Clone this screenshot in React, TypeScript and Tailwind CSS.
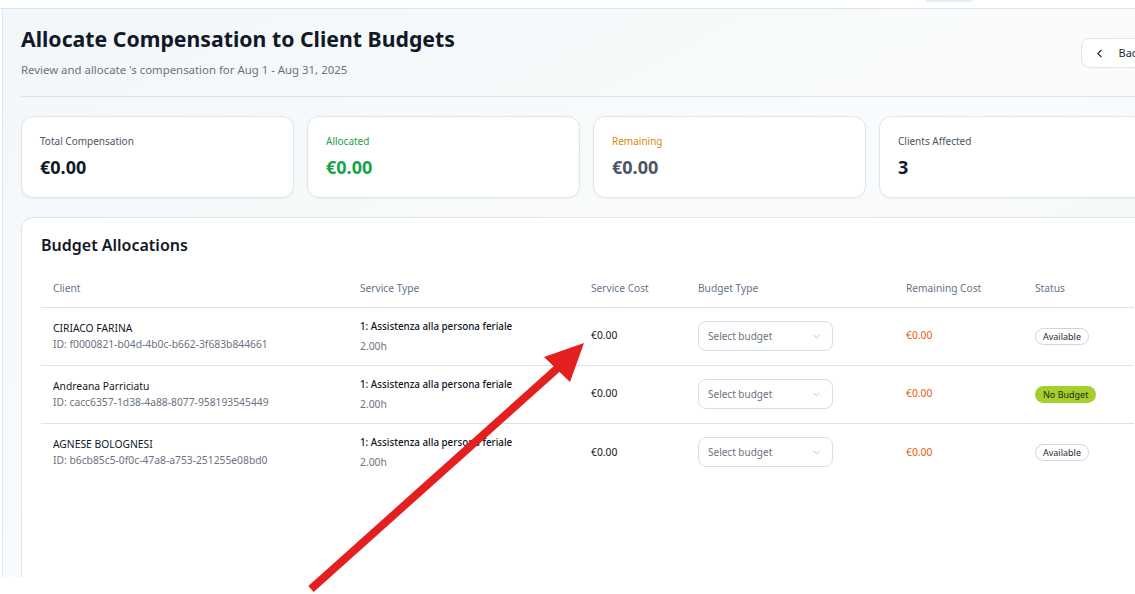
import { ChevronLeft, ChevronDown } from "lucide-react";

type Row = {
  name: string;
  id: string;
  service: string;
  hours: string;
  cost: string;
  remaining: string;
  status: "available" | "none";
};

const rows: Row[] = [
  {
    name: "CIRIACO FARINA",
    id: "ID: f0000821-b04d-4b0c-b662-3f683b844661",
    service: "1: Assistenza alla persona feriale",
    hours: "2.00h",
    cost: "€0.00",
    remaining: "€0.00",
    status: "available",
  },
  {
    name: "Andreana Parriciatu",
    id: "ID: cacc6357-1d38-4a88-8077-958193545449",
    service: "1: Assistenza alla persona feriale",
    hours: "2.00h",
    cost: "€0.00",
    remaining: "€0.00",
    status: "none",
  },
  {
    name: "AGNESE BOLOGNESI",
    id: "ID: b6cb85c5-0f0c-47a8-a753-251255e08bd0",
    service: "1: Assistenza alla persona feriale",
    hours: "2.00h",
    cost: "€0.00",
    remaining: "€0.00",
    status: "available",
  },
];

function StatCard({ label, value, labelClass, valueClass }: { label: string; value: string; labelClass: string; valueClass: string }) {
  return (
    <div className="h-[82px] w-[273px] shrink-0 rounded-xl border border-[#dfe5eb] bg-white px-[18px] pt-[16px] shadow-[0_1px_2px_rgba(15,23,42,0.04)]">
      <div className={`text-[10px] leading-[16px] ${labelClass}`}>{label}</div>
      <div className={`mt-[7px] text-[18px] font-bold leading-[22px] ${valueClass}`}>{value}</div>
    </div>
  );
}

function StatusBadge({ status }: { status: Row["status"] }) {
  if (status === "none") {
    return (
      <span className="inline-flex h-[17px] items-center rounded-full bg-[#a4cf2c] px-[8px] text-[9px] leading-none text-[#1f2a10]">
        No Budget
      </span>
    );
  }
  return (
    <span className="inline-flex h-[17px] items-center rounded-full border border-[#cbd5df] bg-white px-[7px] text-[9px] leading-none text-[#1f2937]">
      Available
    </span>
  );
}

export default function App() {
  return (
    <div className="relative h-[594px] w-[1135px] overflow-hidden bg-white font-['Noto_Sans',sans-serif]">
      <div className="flex h-[577px] flex-col overflow-hidden">
        <header className="flex h-[9px] shrink-0 border-b border-[#dbe5f3] bg-white">
          <div className="ml-[925px] h-[2px] w-[48px] rounded-b-md bg-[#e6edf9]" />
        </header>
        <div className="flex min-h-0 flex-1">
          <div className="w-[3px] shrink-0 border-r border-[#dce6f5] bg-white" />
          <main className="min-w-0 flex-1 bg-gradient-to-br from-[#f3f7f9] via-[#f9fbfc] to-[#f2f6f8] pl-[18px] pt-[15px]">
            <div className="w-[1131px]">
              <div className="flex items-start justify-between border-b border-[#dbe3ea] pb-[18px]">
                <div>
                  <h1 className="text-[21.25px] font-bold leading-[30px] text-[#111827]">
                    Allocate Compensation to Client Budgets
                  </h1>
                  <p className="mt-[7px] text-[11.4px] leading-[17px] text-[#6b7280]">
                    Review and allocate 's compensation for Aug 1 - Aug 31, 2025
                  </p>
                </div>
                <button className="mt-[14px] flex h-[30px] items-center gap-[13px] rounded-lg border border-[#dfe5eb] bg-white pl-[11px] pr-[8px] text-[11px] text-[#1f2937]">
                  <ChevronLeft size={13} strokeWidth={2} />
                  Back
                </button>
              </div>

              <div className="mt-[19px] flex gap-[13px]">
                <StatCard label="Total Compensation" value="€0.00" labelClass="text-[#4b5563]" valueClass="text-[#111827]" />
                <StatCard label="Allocated" value="€0.00" labelClass="text-[#16a34a]" valueClass="text-[#16a34a]" />
                <StatCard label="Remaining" value="€0.00" labelClass="text-[#d98a0b]" valueClass="text-[#4b5563]" />
                <StatCard label="Clients Affected" value="3" labelClass="text-[#4b5563]" valueClass="text-[#111827]" />
              </div>

              <section className="mt-[19px] h-[400px] rounded-xl border border-[#dfe5eb] bg-white px-[19px] pt-[16px]">
                <h2 className="text-[16px] font-semibold leading-[22px] text-[#111827]">Budget Allocations</h2>
                <table className="mt-[14px] w-[1093px] table-fixed border-collapse text-left">
                  <colgroup>
                    <col className="w-[307px]" />
                    <col className="w-[231px]" />
                    <col className="w-[107px]" />
                    <col className="w-[208px]" />
                    <col className="w-[129px]" />
                    <col className="w-[111px]" />
                  </colgroup>
                  <thead>
                    <tr className="h-[37px] border-b border-[#dbe3ea] text-[10.2px] text-[#64748b]">
                      <th className="px-[12px] font-normal">Client</th>
                      <th className="px-[12px] font-normal">Service Type</th>
                      <th className="px-[12px] font-normal">Service Cost</th>
                      <th className="px-[12px] font-normal">Budget Type</th>
                      <th className="px-[12px] font-normal">Remaining Cost</th>
                      <th className="px-[12px] font-normal">Status</th>
                    </tr>
                  </thead>
                  <tbody>
                    {rows.map((r, i) => (
                      <tr
                        key={r.id}
                        className={`h-[58px] text-[10.3px] ${i < rows.length - 1 ? "border-b border-[#dbe3ea]" : ""}`}
                      >
                        <td className="px-[12px] align-middle">
                          <div className="leading-[16px] text-[#111827]">{r.name}</div>
                          <div className="leading-[16px] text-[#6b7280]">{r.id}</div>
                        </td>
                        <td className="px-[12px] align-middle">
                          <div className="text-[9.8px] font-medium leading-[16px] text-[#111827]">{r.service}</div>
                          <div className="mt-[3px] leading-[16px] text-[#6b7280]">{r.hours}</div>
                        </td>
                        <td className="px-[12px] align-middle text-[#111827]">{r.cost}</td>
                        <td className="px-[12px] align-middle">
                          <div className="flex h-[30px] w-[135px] items-center justify-between rounded-lg border border-[#d6e0e8] bg-white pl-[9px] pr-[10px] text-[10px] text-[#6b7280]">
                            <span>Select budget</span>
                            <ChevronDown size={11} strokeWidth={1.5} className="text-[#9ca3af]" />
                          </div>
                        </td>
                        <td className="px-[12px] align-middle text-[#ea580c]">{r.remaining}</td>
                        <td className="px-[12px] align-middle">
                          <StatusBadge status={r.status} />
                        </td>
                      </tr>
                    ))}
                  </tbody>
                </table>
              </section>
            </div>
          </main>
        </div>
      </div>

      <svg
        className="pointer-events-none absolute left-0 top-0"
        width="1135"
        height="594"
        viewBox="0 0 1135 594"
      >
        <line x1="311" y1="589" x2="560" y2="366" stroke="#e41f1f" strokeWidth="8" />
        <polygon points="584,343 544,357 570,382" fill="#e41f1f" />
      </svg>
    </div>
  );
}
